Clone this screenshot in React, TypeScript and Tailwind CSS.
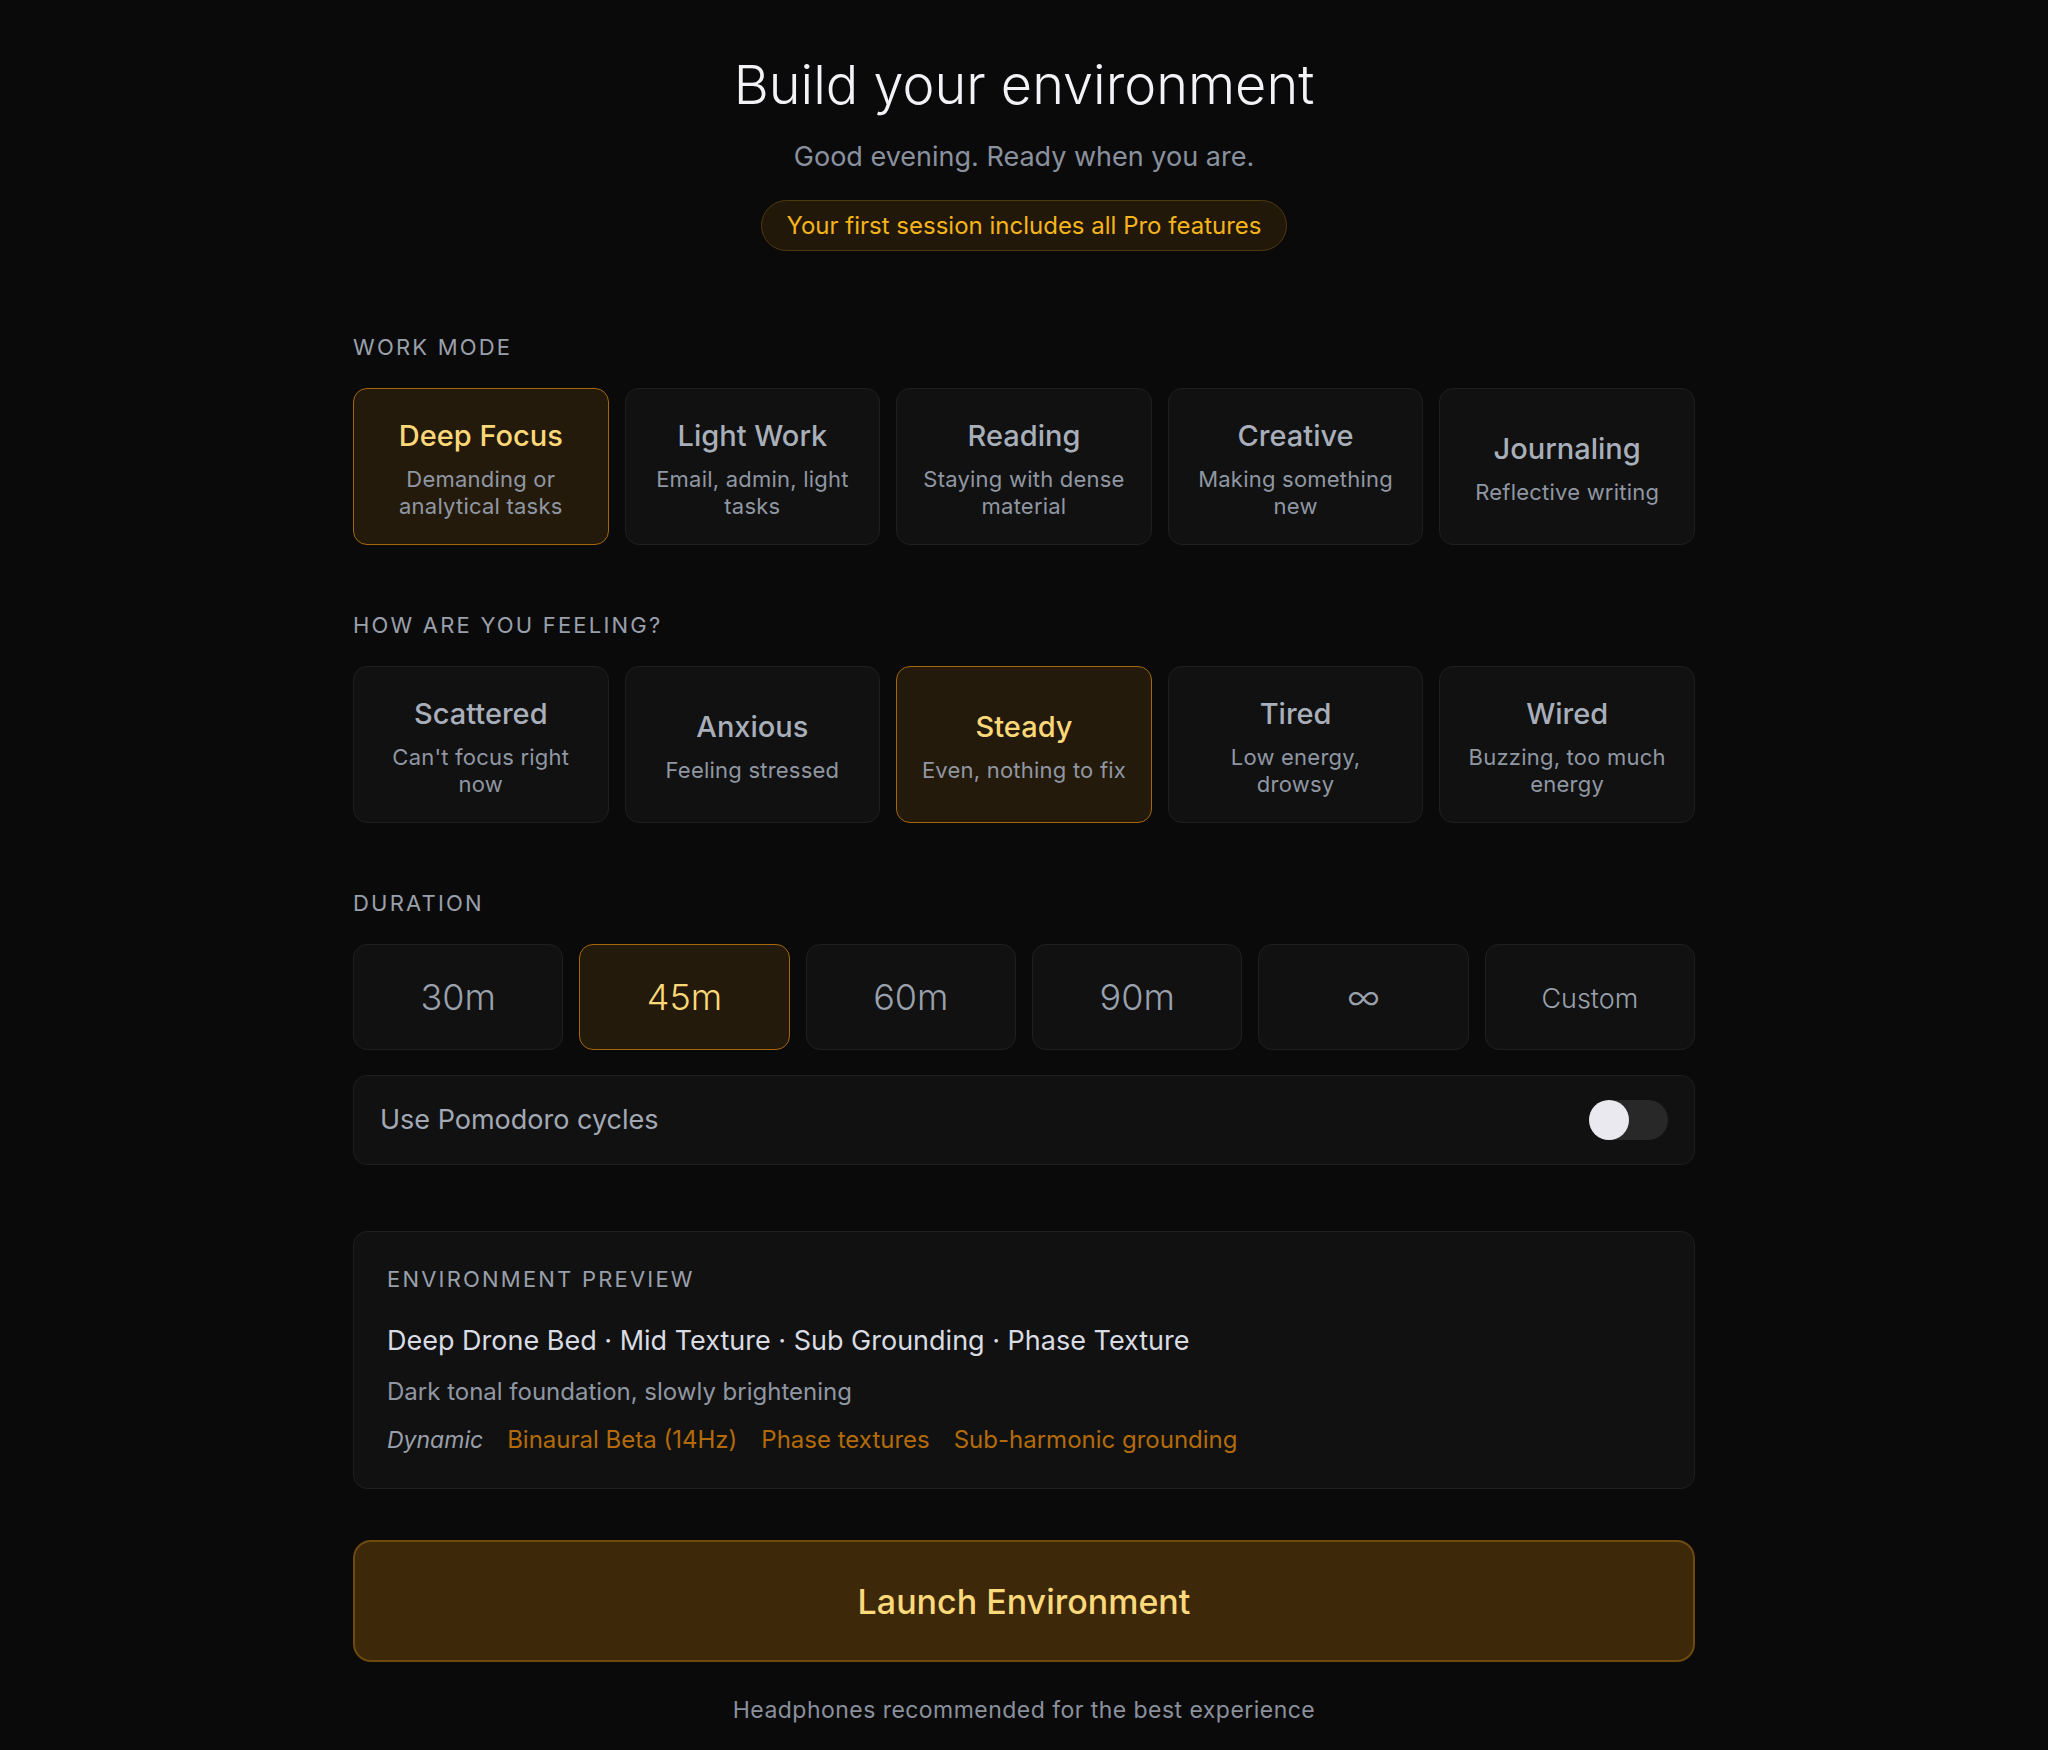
import React from 'react';

type Option = { title: string; desc: string };

const workModes: Option[] = [
  { title: 'Deep Focus', desc: 'Demanding or\nanalytical tasks' },
  { title: 'Light Work', desc: 'Email, admin, light\ntasks' },
  { title: 'Reading', desc: 'Staying with dense\nmaterial' },
  { title: 'Creative', desc: 'Making something\nnew' },
  { title: 'Journaling', desc: 'Reflective writing' },
];

const feelings: Option[] = [
  { title: 'Scattered', desc: "Can't focus right\nnow" },
  { title: 'Anxious', desc: 'Feeling stressed' },
  { title: 'Steady', desc: 'Even, nothing to fix' },
  { title: 'Tired', desc: 'Low energy,\ndrowsy' },
  { title: 'Wired', desc: 'Buzzing, too much\nenergy' },
];

const durations = ['30m', '45m', '60m', '90m', '∞', 'Custom'];

function SectionLabel({ children }: { children: React.ReactNode }) {
  return (
    <div className="mb-[27px] text-[22px] leading-[28px] tracking-[0.1em] text-[#9aa0ab]">
      {children}
    </div>
  );
}

function OptionCard({ option, selected }: { option: Option; selected: boolean }) {
  return (
    <button
      type="button"
      className={`flex h-[157px] flex-col items-center justify-center rounded-[14px] border px-3 pt-[4px] text-center ${
        selected ? 'border-[#a5670c] bg-[#241a0b]' : 'border-[#1f1f1f] bg-[#111111]'
      }`}
    >
      <span
        className={`text-[29px] font-medium leading-[36px] ${
          selected ? 'text-[#fcd878]' : 'text-[#a9afba]'
        }`}
      >
        {option.title}
      </span>
      <span className="mt-[12px] whitespace-pre-line text-[22px] leading-[27px] tracking-[0.01em] text-[#9097a3]">
        {option.desc}
      </span>
    </button>
  );
}

function DurationButton({ label, selected }: { label: string; selected: boolean }) {
  const small = label === 'Custom';
  return (
    <button
      type="button"
      className={`flex h-[106px] items-center justify-center rounded-[14px] border ${
        selected ? 'border-[#a5670c] bg-[#241a0b]' : 'border-[#1f1f1f] bg-[#111111]'
      }`}
    >
      <span
        className={`${small ? 'pt-[4px] text-[27px]' : 'text-[36px]'} font-light ${
          selected ? 'text-[#fcd878]' : 'text-[#9aa1ad]'
        }`}
      >
        {label}
      </span>
    </button>
  );
}

export default function App() {
  const workMode = 'Deep Focus';
  const feeling = 'Steady';
  const duration = '45m';

  return (
    <div className="min-h-screen bg-[#0a0a0a] pb-[24px] pt-[52px] font-[Inter,sans-serif] antialiased">
      <div className="mx-auto w-[1342px]">
        {/* Header */}
        <div className="flex flex-col items-center">
          <h1 className="text-[54px] font-light leading-[66px] text-[#f2f2f7]">
            Build your environment
          </h1>
          <p className="mt-[21px] text-[27px] leading-[36px] text-[#8a919e]">
            Good evening. Ready when you are.
          </p>
          <div className="mt-[25px] rounded-full border border-[#4f390f] bg-[#21180a] px-[25px] py-[10px] text-[24px] leading-[29px] text-[#f5b41c]">
            Your first session includes all Pro features
          </div>
        </div>

        {/* Work mode */}
        <div className="mt-[82px]">
          <SectionLabel>WORK MODE</SectionLabel>
          <div className="grid grid-cols-5 gap-4">
            {workModes.map((m) => (
              <OptionCard key={m.title} option={m} selected={m.title === workMode} />
            ))}
          </div>
        </div>

        {/* Feeling */}
        <div className="mt-[66px]">
          <SectionLabel>HOW ARE YOU FEELING?</SectionLabel>
          <div className="grid grid-cols-5 gap-4">
            {feelings.map((f) => (
              <OptionCard key={f.title} option={f} selected={f.title === feeling} />
            ))}
          </div>
        </div>

        {/* Duration */}
        <div className="mt-[66px]">
          <SectionLabel>DURATION</SectionLabel>
          <div className="grid grid-cols-6 gap-4">
            {durations.map((d) => (
              <DurationButton key={d} label={d} selected={d === duration} />
            ))}
          </div>
          <div className="mt-[25px] flex h-[90px] items-center justify-between rounded-[14px] border border-[#1f1f1f] bg-[#111111] px-[26px]">
            <span className="text-[27px] text-[#a3a9b4]">Use Pomodoro cycles</span>
            <div className="relative h-[40px] w-[79px] rounded-full bg-[#282828]">
              <div className="absolute left-0 top-0 h-[40px] w-[40px] rounded-full bg-[#e9e9ef]" />
            </div>
          </div>
        </div>

        {/* Preview */}
        <div className="mt-[66px] rounded-[14px] border border-[#1f1f1f] bg-[#111111] px-[33px] py-[33px]">
          <div className="text-[22px] leading-[28px] tracking-[0.1em] text-[#9aa0ab]">
            ENVIRONMENT PREVIEW
          </div>
          <div className="mt-[30px] text-[27px] leading-[36px] text-[#d9dce3]">
            Deep Drone Bed · Mid Texture · Sub Grounding · Phase Texture
          </div>
          <div className="mt-[19px] text-[24px] leading-[28px] text-[#9097a3]">
            Dark tonal foundation, slowly brightening
          </div>
          <div className="mt-[19px] flex items-center gap-[24px] text-[24px] leading-[30px]">
            <span className="text-[23px] italic text-[#9aa0ab]">Dynamic</span>
            <span className="text-[#b36b0a]">Binaural Beta (14Hz)</span>
            <span className="text-[#b36b0a]">Phase textures</span>
            <span className="text-[#b36b0a]">Sub-harmonic grounding</span>
          </div>
        </div>

        {/* Launch */}
        <button
          type="button"
          className="mt-[51px] flex h-[122px] w-full items-center justify-center rounded-[18px] border-2 border-[#6e4a0e] bg-[#3d2909] text-[34px] font-medium text-[#fcd97a]"
        >
          Launch Environment
        </button>

        <p className="mt-[33px] text-center text-[23px] leading-[30px] tracking-[0.02em] text-[#8a919d]">
          Headphones recommended for the best experience
        </p>
      </div>
    </div>
  );
}
